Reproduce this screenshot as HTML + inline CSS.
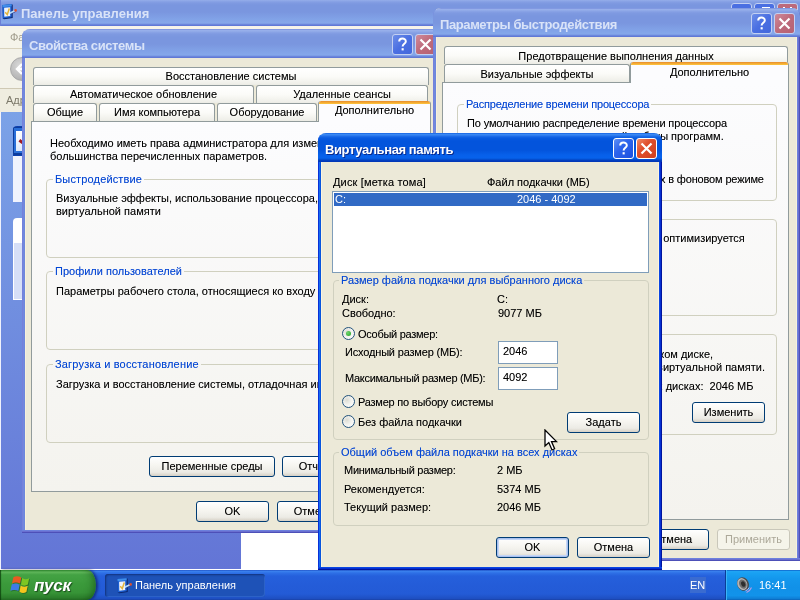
<!DOCTYPE html>
<html lang="ru">
<head>
<meta charset="utf-8">
<title>Виртуальная память</title>
<style>
*{box-sizing:border-box;margin:0;padding:0}
html,body{width:800px;height:600px;overflow:hidden;background:#fff}
body div,body legend{will-change:transform}
body{font-family:"Liberation Sans",sans-serif;font-size:11px;color:#000;position:relative;line-height:13px}
.abs,.t,.btn,.grp,.tab,.gl{position:absolute}
.t{white-space:nowrap;font-size:11px;line-height:13px;letter-spacing:0;text-shadow:0 0 0 rgba(0,0,0,.35)}
/* windows */
.win{position:absolute;overflow:hidden;background-color:#ece9d8;border-radius:8px 8px 0 0;background-repeat:no-repeat;background-size:100% 3px,4px 100%,4px 100%;background-position:left bottom,left top,right top}
.win.inact{background-image:linear-gradient(#6c80dc 0,#6c80dc 1px,#6a6fd0 1px,#6a6fd0 2px,#4d50b8 2px,#4d50b8 3px),linear-gradient(90deg,#7580da 0,#7580da 1px,#7089de 1px,#7089de 2px,#6e86dc 2px,#6e86dc 3px,#f7f1dc 3px,#f7f1dc 4px),linear-gradient(90deg,#f7f1dc 0,#f7f1dc 1px,#6c80dc 1px,#6c80dc 2px,#6a6fd0 2px,#6a6fd0 3px,#4d50b8 3px,#4d50b8 4px)}
.win.act{background-image:linear-gradient(#0a46e2 0,#0a46e2 1px,#0630d2 1px,#0630d2 2px,#00149e 2px,#00149e 3px),linear-gradient(90deg,#0831d9 0,#0831d9 1px,#166aee 1px,#166aee 2px,#0855dd 2px,#0855dd 3px,#fbf4de 3px,#fbf4de 4px),linear-gradient(90deg,#fbf4de 0,#fbf4de 1px,#0a46e2 1px,#0a46e2 2px,#0630d2 2px,#0630d2 3px,#00149e 3px,#00149e 4px)}
.tbar{position:absolute;top:0;height:29px}
.tbar.inact{background:linear-gradient(#6a82d8 0,#98b0eb 1px,#96aeea 2px,#8ba5e6 3px,#7f9ae1 5px,#7a96df 8px,#7a96df 15px,#81a2e7 22px,#85a8ea 26px,#7795e2 27px,#6079d6 28px,#6079d6 29px)}
.tbar.act{background:linear-gradient(#0855dd 0,#3a8af4 1px,#3886f2 2px,#2270ea 3px,#0a5ce0 5px,#0354dc 8px,#0354dc 17px,#0760ea 22px,#0762ec 25px,#0556d8 26px,#0345c6 27px,#0238b8 28px,#0238b8 29px)}
.ttl{position:absolute;left:7px;top:9px;font-weight:bold;font-size:13px;line-height:16px;white-space:nowrap;letter-spacing:-.4px}
.tbar.inact .ttl{color:#d9e3f8}
.tbar.act .ttl{color:#fff;text-shadow:1px 1px 0 #0a2a8c}
.cb{position:absolute;top:5px;width:21px;height:21px;border-radius:3px;border:1px solid #fff}
.inact .cb{border-color:#c3d0f2}
.cb.help.a{background:linear-gradient(135deg,#5d8ff5 0,#2e65ec 40%,#1c4fe0 100%)}
.cb.close.a{background:linear-gradient(135deg,#ee8a68 0,#e04e2c 40%,#d0401e 100%)}
.cb.help.i{background:linear-gradient(135deg,#6d8ee8 0,#4a6fe2 50%,#4468dc 100%)}
.cb.close.i{background:linear-gradient(135deg,#cf8a9a 0,#bd6a7b 50%,#b66173 100%)}
.cb svg{position:absolute;left:0;top:0}
/* controls */
.btn{text-shadow:0 0 0 rgba(0,0,0,.35);height:21px;border:1px solid #003c74;border-radius:3px;background:linear-gradient(#fff 0,#f6f5f0 45%,#ecebe5 80%,#d6d0c5 100%);text-align:center;font-size:11px;line-height:19px;letter-spacing:0;white-space:nowrap}
.btn.def{box-shadow:inset 0 0 0 1px #a8c0ee,inset 0 0 0 2px #c4d6f6}
.btn.dis{border-color:#c9c7ba;color:#aca899;background:#f5f4ea;text-shadow:none}
fieldset.grp{border:1px solid #d0d0bf;border-radius:4px;padding:0;margin:0;min-width:0}
fieldset.grp legend{text-shadow:0 0 0 rgba(0,50,190,.35);color:#0046d5;white-space:nowrap;font-size:11px;line-height:13px;letter-spacing:0;padding:0 2px;margin-left:6px}
.gl{color:#0046d5;white-space:nowrap;font-size:11px;line-height:13px;letter-spacing:0;padding:0 2px}
.tab{text-shadow:0 0 0 rgba(0,0,0,.35);height:18px;border:1px solid #919b9c;border-bottom:0;border-radius:3px 3px 0 0;background:linear-gradient(#fff 0,#fbfbf8 50%,#f0f0ea 90%,#ebebe4 100%);text-align:center;font-size:11px;line-height:16px;letter-spacing:0;white-space:nowrap;overflow:hidden}
.tab.sel{background:#fcfcfe;border-top:0;height:21px;line-height:20px}
.tab.sel:before{content:"";position:absolute;left:-1px;right:-1px;top:0;height:3px;background:linear-gradient(#e68b2c,#ffc73c);border-radius:3px 3px 0 0}
.pane{position:absolute;border:1px solid #919b9c;background:linear-gradient(#fcfcfe 0,#f4f3ee 100%)}
.radio{position:absolute;width:13px;height:13px;border-radius:50%;border:1px solid #21527b;background:radial-gradient(circle at 35% 35%,#dcdcd4 0,#f4f4f0 50%,#fff 100%)}
.radio.on:after{content:"";position:absolute;left:3px;top:3px;width:5px;height:5px;border-radius:50%;background:radial-gradient(circle at 35% 35%,#6fd46f,#21a121)}
.edit{position:absolute;border:1px solid #7f9db9;background:#fff;font-size:11px;line-height:13px;letter-spacing:0}
</style>
</head>
<body>

<!-- ============ Control Panel (background window) ============ -->
<div class="abs" id="cp" style="left:0;top:0;width:800px;height:570px;background:#fff">
  <div class="abs" style="left:0;top:0;width:800px;height:26px;background:linear-gradient(#96aeea 0,#8ba5e6 1px,#7f9ae1 3px,#7a96df 5px,#7a96df 12px,#81a2e7 19px,#85a8ea 23px,#7795e2 24px,#6079d6 25px,#6079d6 26px)"></div>
  <div class="abs" style="left:0;top:0;width:1px;height:26px;background:#6a7fd6"></div>
  <!-- title icon -->
  <svg class="abs" style="left:0px;top:0px" width="20" height="22" viewBox="0 0 20 22">
    <path d="M2.6 5.2 L11.9 4.2 L12.7 4.8 L12.7 17.9 L4.2 19.3 L2.9 18.7 Z" fill="#0b2468"/>
    <path d="M2.4 4.9 L11.7 4.1 L11.7 17.3 L2.8 18.6 Z" fill="#1c5fd2"/>
    <path d="M2.5 5 L11.6 4.2 L11.6 6.3 L2.5 7.2 Z" fill="#3f8eea"/>
    <path d="M4.1 7.8 L10.2 7.2 L10.2 15.9 L4.3 16.8 Z" fill="#eef3fc"/>
    <path d="M5.2 12.2 L7.3 14.6 L9.3 8.4" stroke="#e3b33a" stroke-width="1.5" fill="none"/>
    <path d="M10.3 14.1 L15.6 11.6" stroke="#2a3f90" stroke-width=".9"/>
    <path d="M9.8 13.2 L14.8 10.8" stroke="#b9dcfa" stroke-width="1.6"/>
    <circle cx="15.6" cy="10.4" r="1.3" fill="#e0502c"/>
  </svg>
  <div class="abs" style="left:21px;top:6px;font-weight:bold;font-size:13px;line-height:16px;color:#d9e3f8;white-space:nowrap;letter-spacing:0">Панель управления</div>
  <!-- caption buttons (mostly hidden) -->
  <div class="abs" style="left:731px;top:3px;width:21px;height:21px;border-radius:3px;border:1px solid #c3d0f2;background:#4a6fe2"></div>
  <div class="abs" style="left:754px;top:3px;width:21px;height:21px;border-radius:3px;border:1px solid #c3d0f2;background:#4a6fe2"></div>
  <div class="abs" style="left:777px;top:3px;width:21px;height:21px;border-radius:3px;border:1px solid #c3d0f2;background:#bd6a7b"></div>
  <div class="abs" style="left:762px;top:7px;width:8px;height:3px;background:#fff"></div><div class="abs" style="left:783px;top:7px;width:2px;height:2px;background:#fff"></div><div class="abs" style="left:790px;top:7px;width:2px;height:2px;background:#fff"></div>
  <!-- menubar -->
  <div class="abs" style="left:0;top:26px;width:800px;height:22px;background:#f5f4ea"></div>
  <div class="t" style="left:10px;top:31px;color:#a09c8c;text-shadow:none">Файл</div>
  <div class="abs" style="left:0;top:48px;width:800px;height:1px;background:#d8d2bd"></div>
  <!-- toolbar -->
  <div class="abs" style="left:0;top:49px;width:800px;height:39px;background:#f3f2e9"></div>
  <div class="abs" style="left:10px;top:57px;width:24px;height:24px;border-radius:50%;background:radial-gradient(circle at 40% 35%,#d9d9d9 0,#b9b9b9 60%,#9c9c9c 100%);border:1px solid #a9a9a9"></div>
  <svg class="abs" style="left:14px;top:62px" width="14" height="14" viewBox="0 0 14 14"><path d="M8 2 L3 7 L8 12 M3 7 H12" stroke="#fff" stroke-width="2.4" fill="none"/></svg>
  <div class="abs" style="left:0;top:88px;width:800px;height:1px;background:#cfc9b4"></div>
  <!-- address bar -->
  <div class="abs" style="left:0;top:89px;width:800px;height:23px;background:#efede0"></div>
  <div class="t" style="left:6px;top:94px;color:#7b7869;text-shadow:none">Адрес:</div>
  <!-- left pane -->
  <div class="abs" style="left:0;top:112px;width:241px;height:457px;background:linear-gradient(#7ba2e7 0,#6375d6 100%)"></div>
  <div class="abs" style="left:0;top:112px;width:1px;height:457px;background:#f0f2fc"></div>
  <div class="abs" style="left:13px;top:126px;width:200px;height:30px;background:linear-gradient(90deg,#0d3fae,#2a5fd0);border-radius:4px 0 0 0"></div>
  <div class="abs" style="left:13px;top:127px;width:12px;height:28px;background:#0c3c9c;border-radius:2px 0 0 2px"></div><div class="abs" style="left:14px;top:128px;width:12px;height:25px;background:#2a6fd8"></div><div class="abs" style="left:16px;top:131px;width:9px;height:20px;background:linear-gradient(#fff,#dfe9fa)"></div><div class="abs" style="left:19px;top:140px;width:4px;height:3px;background:#a01820;transform:rotate(35deg)"></div>
  <div class="abs" style="left:13px;top:156px;width:200px;height:46px;background:#f0f3fd"></div>
  <div class="abs" style="left:13px;top:218px;width:200px;height:25px;background:#fff;border-radius:4px 0 0 0"></div>
  <div class="abs" style="left:13px;top:243px;width:200px;height:57px;background:#d6dff7;border:1px solid #fff;border-top:0"></div>
</div>

<!-- ============ System Properties (inactive) ============ -->
<div class="win inact" style="left:22px;top:29px;width:419px;height:504px"><div class="abs" style="left:-22px;top:-29px;width:800px;height:600px">
  <div class="tbar inact" style="left:22px;top:29px;width:419px;right:auto"><div class="ttl">Свойства системы</div>
    <div class="cb help i" style="left:370px"><svg width="19" height="19" viewBox="0 0 19 19"><path d="M6.2 6.6 C6.2 2.6 12.8 2.6 12.8 6.4 C12.8 8.8 9.6 8.9 9.6 11.6" stroke="#fff" stroke-width="2" fill="none"/><rect x="8.6" y="13.2" width="2.1" height="2.2" fill="#fff"/></svg></div>
    <div class="cb close i" style="left:393px"><svg width="19" height="19" viewBox="0 0 19 19"><path d="M4.5 4.5 L14.5 14.5 M14.5 4.5 L4.5 14.5" stroke="#fff" stroke-width="2.2"/></svg></div>
  </div>
  <!-- tabs -->
  <div class="tab" style="left:33px;top:67px;width:396px">Восстановление системы</div>
  <div class="tab" style="left:33px;top:85px;width:221px">Автоматическое обновление</div>
  <div class="tab" style="left:256px;top:85px;width:172px">Удаленные сеансы</div>
  <div class="tab" style="left:33px;top:103px;width:64px">Общие</div>
  <div class="tab" style="left:99px;top:103px;width:116px">Имя компьютера</div>
  <div class="tab" style="left:217px;top:103px;width:100px">Оборудование</div>
  <div class="pane" style="left:31px;top:121px;width:400px;height:371px"></div>
  <div class="tab sel" style="left:318px;top:101px;width:113px;line-height:18px">Дополнительно</div>
  <div class="t" style="left:50px;top:137px">Необходимо иметь права администратора для изменения</div>
  <div class="t" style="left:50px;top:150px">большинства перечисленных параметров.</div>
  <fieldset class="grp" style="left:46px;top:173px;width:372px;height:85px"><legend style="letter-spacing:.15px">Быстродействие</legend></fieldset>
  <div class="t" style="left:56px;top:192px">Визуальные эффекты, использование процессора, оперативной и</div>
  <div class="t" style="left:56px;top:205px">виртуальной памяти</div>
  <fieldset class="grp" style="left:46px;top:265px;width:372px;height:85px"><legend>Профили пользователей</legend></fieldset>
  <div class="t" style="left:56px;top:285px">Параметры рабочего стола, относящиеся ко входу в систему</div>
  <fieldset class="grp" style="left:46px;top:358px;width:372px;height:85px"><legend style="letter-spacing:.18px">Загрузка и восстановление</legend></fieldset>
  <div class="t" style="left:56px;top:378px">Загрузка и восстановление системы, отладочная информация</div>
  <div class="btn" style="left:149px;top:456px;width:126px">Переменные среды</div>
  <div class="btn" style="left:282px;top:456px;width:126px">Отчет об ошибках</div>
  <div class="btn" style="left:196px;top:501px;width:73px">OK</div>
  <div class="btn" style="left:277px;top:501px;width:73px">Отмена</div>
</div></div>
<!--SYSEND-->
<!-- ============ Performance Options (inactive) ============ -->
<div class="win inact" style="left:433px;top:8px;width:367px;height:553px"><div class="abs" style="left:-433px;top:-8px;width:800px;height:600px">
  <div class="tbar inact" style="left:433px;top:8px;width:367px;right:auto"><div class="ttl">Параметры быстродействия</div>
    <div class="cb help i" style="left:318px"><svg width="19" height="19" viewBox="0 0 19 19"><path d="M6.2 6.6 C6.2 2.6 12.8 2.6 12.8 6.4 C12.8 8.8 9.6 8.9 9.6 11.6" stroke="#fff" stroke-width="2" fill="none"/><rect x="8.6" y="13.2" width="2.1" height="2.2" fill="#fff"/></svg></div>
    <div class="cb close i" style="left:341px"><svg width="19" height="19" viewBox="0 0 19 19"><path d="M4.5 4.5 L14.5 14.5 M14.5 4.5 L4.5 14.5" stroke="#fff" stroke-width="2.2"/></svg></div>
  </div>
  <div class="tab" style="left:444px;top:46px;width:344px;padding-top:1px">Предотвращение выполнения данных</div>
  <div class="tab" style="left:444px;top:64px;width:186px;padding-top:1px">Визуальные эффекты</div>
  <div class="pane" style="left:442px;top:82px;width:347px;height:438px"></div>
  <div class="tab sel" style="left:630px;top:62px;width:159px">Дополнительно</div>
  <fieldset class="grp" style="left:457px;top:98px;width:320px;height:103px"><legend style="letter-spacing:-.2px">Распределение времени процессора</legend></fieldset>
  <div class="t" style="left:467px;top:117px;letter-spacing:-.14px">По умолчанию распределение времени процессора</div>
  <div class="t" style="right:76px;top:130px">оптимизируется для наилучшей работы программ.</div>
  <div class="t" style="right:36px;top:173px;letter-spacing:-.15px">служб, работающих в фоновом режиме</div>
  <fieldset class="grp" style="left:457px;top:213px;width:320px;height:103px"><legend>Использование памяти</legend></fieldset>
  <div class="t" style="right:55px;top:232px">По умолчанию использование памяти оптимизируется</div>
  <fieldset class="grp" style="left:457px;top:328px;width:320px;height:107px"><legend>Виртуальная память</legend></fieldset>
  <div class="t" style="right:87px;top:348px">Файл подкачки - это область на жестком диске,</div>
  <div class="t" style="right:35px;top:361px">используемая для хранения страниц виртуальной памяти.</div>
  <div class="t" style="right:47px;top:380px">Общий объем файла подкачки на всех дисках:&nbsp; 2046 МБ</div>
  <div class="btn" style="left:692px;top:402px;width:73px">Изменить</div>
  <div class="btn" style="left:555px;top:529px;width:73px">OK</div>
  <div class="btn" style="left:636px;top:529px;width:73px">Отмена</div>
  <div class="btn dis" style="left:717px;top:529px;width:73px">Применить</div>
</div></div>
<!--PERFEND-->
<!-- ============ Virtual Memory (active) ============ -->
<div class="win act" style="left:318px;top:133px;width:344px;height:437px"><div class="abs" style="left:-318px;top:-133px;width:800px;height:600px">
  <div class="tbar act" style="left:318px;top:133px;width:344px;right:auto"><div class="ttl">Виртуальная память</div>
    <div class="cb help a" style="left:295px"><svg width="19" height="19" viewBox="0 0 19 19"><path d="M6.2 6.6 C6.2 2.6 12.8 2.6 12.8 6.4 C12.8 8.8 9.6 8.9 9.6 11.6" stroke="#fff" stroke-width="2" fill="none"/><rect x="8.6" y="13.2" width="2.1" height="2.2" fill="#fff"/></svg></div>
    <div class="cb close a" style="left:318px"><svg width="19" height="19" viewBox="0 0 19 19"><path d="M4.5 4.5 L14.5 14.5 M14.5 4.5 L4.5 14.5" stroke="#fff" stroke-width="2.2"/></svg></div>
  </div>
  <div class="t" style="left:333px;top:176px;letter-spacing:.15px">Диск [метка тома]</div>
  <div class="t" style="left:487px;top:176px">Файл подкачки (МБ)</div>
  <div class="abs" style="left:332px;top:191px;width:317px;height:82px;border:1px solid #7f9db9;background:#fff"></div>
  <div class="abs" style="left:334px;top:193px;width:313px;height:13px;background:#316ac5"></div>
  <div class="t" style="left:335px;top:193px;color:#fff;text-shadow:none">C:</div>
  <div class="t" style="left:517px;top:193px;color:#fff;text-shadow:none">2046 - 4092</div>
  <fieldset class="grp" style="left:333px;top:274px;width:316px;height:166px"><legend style="margin-left:5px">Размер файла подкачки для выбранного диска</legend></fieldset>
  <div class="t" style="left:342px;top:293px">Диск:</div>
  <div class="t" style="left:497px;top:293px">C:</div>
  <div class="t" style="left:342px;top:307px">Свободно:</div>
  <div class="t" style="left:498px;top:307px">9077 МБ</div>
  <div class="radio on" style="left:342px;top:327px"></div>
  <div class="t" style="left:358px;top:328px;letter-spacing:-.28px">Особый размер:</div>
  <div class="t" style="left:345px;top:346px;letter-spacing:-.17px">Исходный размер (МБ):</div>
  <div class="edit" style="left:498px;top:341px;width:60px;height:23px"></div>
  <div class="t" style="left:503px;top:345px">2046</div>
  <div class="t" style="left:345px;top:372px;letter-spacing:-.3px">Максимальный размер (МБ):</div>
  <div class="edit" style="left:498px;top:367px;width:60px;height:23px"></div>
  <div class="t" style="left:503px;top:371px">4092</div>
  <div class="radio" style="left:342px;top:395px"></div>
  <div class="t" style="left:358px;top:396px;letter-spacing:-.22px">Размер по выбору системы</div>
  <div class="radio" style="left:342px;top:415px"></div>
  <div class="t" style="left:358px;top:416px">Без файла подкачки</div>
  <div class="btn" style="left:567px;top:412px;width:73px">Задать</div>
  <fieldset class="grp" style="left:333px;top:446px;width:316px;height:80px"><legend style="margin-left:5px">Общий объем файла подкачки на всех дисках</legend></fieldset>
  <div class="t" style="left:344px;top:464px;letter-spacing:-.27px">Минимальный размер:</div>
  <div class="t" style="left:497px;top:464px">2 МБ</div>
  <div class="t" style="left:344px;top:483px">Рекомендуется:</div>
  <div class="t" style="left:497px;top:483px">5374 МБ</div>
  <div class="t" style="left:344px;top:501px">Текущий размер:</div>
  <div class="t" style="left:497px;top:501px">2046 МБ</div>
  <div class="btn def" style="left:496px;top:537px;width:73px">OK</div>
  <div class="btn" style="left:577px;top:537px;width:73px">Отмена</div>
</div></div>
<!--VMEND-->

<!-- ============ Taskbar ============ -->
<div class="abs" id="taskbar" style="left:0;top:570px;width:800px;height:30px;background:linear-gradient(#1f4fc4 0,#3b82ee 4%,#2e70e6 10%,#2560dc 20%,#245cd8 50%,#235bd6 80%,#1e4fc2 95%,#1a41a6 100%)">
  <!-- start button -->
  <div class="abs" style="left:0;top:0;width:96px;height:30px;border-radius:0 9px 9px 0/0 15px 15px 0;background:linear-gradient(#2f8a2f 0,#62bb5d 7%,#44a344 16%,#3b9a3b 45%,#379437 75%,#2d822d 92%,#256f25 100%);box-shadow:2px 0 3px rgba(0,0,40,.5), inset -6px 0 8px -4px rgba(0,40,0,.45), inset 2px 0 1px -1px rgba(10,60,10,.8)"></div>
  <svg class="abs" style="left:0;top:0" width="34" height="30" viewBox="0 0 34 30">
    <g transform="translate(.8 .8)" fill="#1c4a1c" opacity=".55">
      <path d="M13.4 7.2 C15.5 5.8 18.5 5.8 21.3 7.4 L20 13.6 C17.5 12.2 14.8 12.2 12 13.4 Z"/>
      <path d="M22.3 8 C24.5 9.6 26.8 9.6 29.2 8.2 L27.9 14.6 C25.5 16 23.2 16 21 14.4 Z"/>
      <path d="M11.7 14.6 C14 13.2 16.8 13.2 19.6 14.8 L18.4 21 C15.8 19.6 13 19.6 10.4 20.8 Z"/>
      <path d="M20.7 15.6 C23 17.2 25.2 17.2 27.7 15.8 L26.4 22 C24 23.4 21.8 23.4 19.5 21.8 Z"/>
    </g>
    <path d="M13.4 7.2 C15.5 5.8 18.5 5.8 21.3 7.4 L20 13.6 C17.5 12.2 14.8 12.2 12 13.4 Z" fill="#ea5a22"/>
    <path d="M22.3 8 C24.5 9.6 26.8 9.6 29.2 8.2 L27.9 14.6 C25.5 16 23.2 16 21 14.4 Z" fill="#7cc623"/>
    <path d="M11.7 14.6 C14 13.2 16.8 13.2 19.6 14.8 L18.4 21 C15.8 19.6 13 19.6 10.4 20.8 Z" fill="#3f7be6"/>
    <path d="M20.7 15.6 C23 17.2 25.2 17.2 27.7 15.8 L26.4 22 C24 23.4 21.8 23.4 19.5 21.8 Z" fill="#f5c51d"/>
  </svg>
  <div class="abs" style="left:34px;top:6px;font-size:17px;line-height:20px;font-weight:bold;font-style:italic;color:#fff;text-shadow:1px 1px 1px #1d4d1d;letter-spacing:-.3px">пуск</div>
  <!-- task button -->
  <div class="abs" style="left:105px;top:4px;width:160px;height:23px;border-radius:3px;background:#1e52b7;box-shadow:inset 1px 1px 2px #12327a, inset -1px -1px 0 #2f66cc"></div>
  <svg class="abs" style="left:114.5px;top:3.5px" width="20" height="22" viewBox="0 0 20 22">
    <path d="M2.6 5.2 L11.9 4.2 L12.7 4.8 L12.7 17.9 L4.2 19.3 L2.9 18.7 Z" fill="#0b2468"/>
    <path d="M2.4 4.9 L11.7 4.1 L11.7 17.3 L2.8 18.6 Z" fill="#1c5fd2"/>
    <path d="M2.5 5 L11.6 4.2 L11.6 6.3 L2.5 7.2 Z" fill="#3f8eea"/>
    <path d="M4.1 7.8 L10.2 7.2 L10.2 15.9 L4.3 16.8 Z" fill="#eef3fc"/>
    <path d="M5.2 12.2 L7.3 14.6 L9.3 8.4" stroke="#e3b33a" stroke-width="1.5" fill="none"/>
    <path d="M10.3 14.1 L15.6 11.6" stroke="#2a3f90" stroke-width=".9"/>
    <path d="M9.8 13.2 L14.8 10.8" stroke="#b9dcfa" stroke-width="1.6"/>
    <circle cx="15.6" cy="10.4" r="1.3" fill="#e0502c"/>
  </svg>
  <div class="t" style="left:135px;top:9px;color:#fff;text-shadow:none">Панель управления</div>
  <!-- language -->
  <div class="abs" style="left:690px;top:7px;width:16px;height:16px;background:#3a6bd0"></div>
  <div class="t" style="left:690px;top:9px;color:#fff;text-shadow:none;letter-spacing:0">EN</div>
  <!-- tray -->
  <div class="abs" style="left:725px;top:0;width:75px;height:30px;background:linear-gradient(#0c5fc8 0,#1fa4f4 5%,#18a0f2 12%,#1396ec 30%,#1191e8 60%,#1293ea 85%,#0f7fd6 95%,#0b63b8 100%);border-left:1px solid #0a3d96;box-shadow:inset 1px 0 0 #3cb4f8"></div>
  <svg class="abs" style="left:734px;top:5px" width="22" height="20" viewBox="0 0 22 20">
    <g transform="rotate(-25 9 9)">
      <ellipse cx="9" cy="9" rx="5.8" ry="7" fill="#4a4a4a"/>
      <ellipse cx="8.4" cy="8.8" rx="4.9" ry="6.2" fill="#b4b4b4"/>
      <ellipse cx="8.8" cy="9" rx="3.6" ry="4.8" fill="#6e6e6e"/>
      <ellipse cx="9.2" cy="9.2" rx="2" ry="2.8" fill="#2e2e2e"/>
    </g>
    <path d="M12.5 17.5 Q16 16 17.5 12.5" stroke="#b79be6" stroke-width="1.1" fill="none"/>
    <path d="M11.5 15.8 Q14 15 15.2 12.6" stroke="#c7b0ee" stroke-width="1" fill="none"/>
  </svg>
  <div class="t" style="left:759px;top:9px;color:#fff;text-shadow:none;letter-spacing:0">16:41</div>
</div>

<!-- cursor -->
<svg class="abs" style="left:544px;top:429px" width="14" height="23" viewBox="0 0 14 23">
  <path d="M1 1 L1 17 L4.8 13.5 L8 21 L10.6 19.8 L7.5 12.6 L12.5 12.6 Z" fill="#fff" stroke="#000" stroke-width="1.3" stroke-linejoin="miter"/>
</svg>
</body>
</html>
